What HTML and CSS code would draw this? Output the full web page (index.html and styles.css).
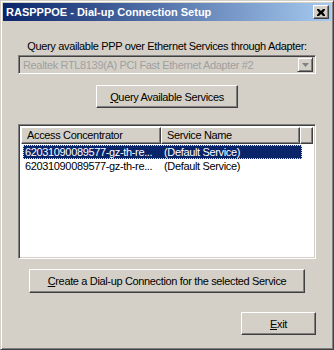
FILE: index.html
```html
<!DOCTYPE html>
<html lang="en">
  <head>
    <meta charset="UTF-8" />
    <title>RASPPPOE - Dial-up Connection Setup</title>
    <link rel="stylesheet" href="styles.css">
  </head>
  <body>
    <div class="window">
      <div class="titlebar">
        <span class="title">RASPPPOE - Dial-up Connection Setup</span>
        <span class="close">
          <svg width="8" height="7" viewBox="0 0 8 7">
            <path d="M0 0h2l2 2 2-2h2v1L6 3.5 8 6v1H6L4 5 2 7H0V6l2-2.5L0 1z" fill="#000" />
          </svg>
        </span>
      </div>
      <div class="content">
        <div class="prompt">Query available PPP over Ethernet Services through Adapter:</div>
        <div class="combo">
          <span class="combo-text">Realtek RTL8139(A) PCI Fast Ethernet Adapter #2</span>
          <span class="combo-arrow">
            <svg width="7" height="4" viewBox="0 0 7 4">
              <path d="M0 0h7L3.5 4z" fill="#808080" />
            </svg>
          </span>
        </div>
        <div class="row-center">
          <button class="btn btn-query"><u>Q</u>uery Available Services</button>
        </div>
        <div class="listview">
          <div class="lv-header">
            <span class="lv-col col-ac">Access Concentrator</span>
            <span class="lv-col col-sn">Service Name</span>
            <span class="lv-col col-rest"></span>
          </div>
          <div class="lv-row selected">
            <span class="col-ac">62031090089577-gz-th-re...</span>
            <span class="col-sn">(Default Service)</span>
          </div>
          <div class="lv-row">
            <span class="col-ac">62031090089577-gz-th-re...</span>
            <span class="col-sn">(Default Service)</span>
          </div>
        </div>
        <div class="row-center">
          <button class="btn btn-create"><u>C</u>reate a Dial-up Connection for the selected Service</button>
        </div>
        <div class="row-end">
          <button class="btn btn-exit"><u>E</u>xit</button>
        </div>
      </div>
    </div>
  </body>
</html>
```

FILE: styles.css
```css
body {
  margin: 0;
  font-family: "Liberation Sans", Arial, sans-serif;
  font-size: 11px;
  letter-spacing: -0.35px;
  background: #d4d0c8;
}
.window {
  width: 334px;
  height: 350px;
  box-sizing: border-box;
  background: #d4d0c8;
  border: 1px solid;
  border-color: #d4d0c8 #404040 #404040 #d4d0c8;
  box-shadow: inset 1px 1px #fff, inset -1px -1px #808080;
  padding: 2px;
  display: flex;
  flex-direction: column;
}
.titlebar {
  height: 18px;
  background: linear-gradient(to right, #0a246a, #a6caf0);
  display: flex;
  align-items: center;
  justify-content: space-between;
  padding: 0 2px 0 3px;
}
.title {
  color: #fff;
  font-weight: bold;
  font-size: 11px;
  letter-spacing: 0;
}
.close {
  width: 16px;
  height: 14px;
  box-sizing: border-box;
  background: #d4d0c8;
  border: 1px solid;
  border-color: #fff #404040 #404040 #fff;
  box-shadow: inset -1px -1px #808080;
  display: flex;
  align-items: center;
  justify-content: center;
}
.content {
  flex: 1;
  padding: 19px 15px 0 15px;
  display: flex;
  flex-direction: column;
}
.prompt {
  text-align: center;
  line-height: 13px;
  margin-bottom: 2px;
  white-space: nowrap;
}
.combo {
  height: 19px;
  box-sizing: border-box;
  border: 1px solid;
  border-color: #808080 #fff #fff #808080;
  box-shadow: inset 1px 1px #404040, inset -1px -1px #d4d0c8;
  padding: 2px;
  display: flex;
  align-items: center;
}
.combo-text {
  flex: 1;
  color: #a0a0a0;
  padding-left: 2px;
  white-space: nowrap;
}
.combo-arrow {
  width: 16px;
  height: 15px;
  box-sizing: border-box;
  border: 1px solid;
  border-color: #d4d0c8 #404040 #404040 #d4d0c8;
  box-shadow: inset 1px 1px #fff, inset -1px -1px #808080;
  display: flex;
  align-items: center;
  justify-content: center;
}
.row-center {
  display: flex;
  justify-content: center;
}
.row-end {
  display: flex;
  justify-content: flex-end;
}
.btn {
  font-family: "Liberation Sans", Arial, sans-serif;
  font-size: 11px;
  letter-spacing: -0.35px;
  color: #000;
  background: #d4d0c8;
  border: 1px solid;
  border-color: #fff #404040 #404040 #fff;
  box-shadow: inset -1px -1px #808080, inset 1px 1px #d4d0c8;
  padding: 0;
  white-space: nowrap;
}
.btn-query {
  width: 142px;
  height: 23px;
  margin-top: 11px;
}
.listview {
  height: 135px;
  margin-top: 16px;
  box-sizing: border-box;
  background: #fff;
  border: 1px solid;
  border-color: #808080 #fff #fff #808080;
  box-shadow: inset 1px 1px #404040, inset -1px -1px #d4d0c8;
  padding: 2px;
}
.lv-header {
  display: flex;
  height: 17px;
}
.lv-col {
  box-sizing: border-box;
  background: #d4d0c8;
  border: 1px solid;
  border-color: #fff #404040 #404040 #fff;
  box-shadow: inset -1px -1px #808080;
  padding-left: 5px;
  line-height: 15px;
  white-space: nowrap;
}
.col-ac {
  width: 140px;
}
.col-sn {
  width: 139px;
}
.col-rest {
  flex: 1;
}
.lv-row {
  display: flex;
  width: 279px;
  height: 14px;
  line-height: 12px;
  margin-left: 2px;
  box-sizing: border-box;
  border: 1px solid transparent;
  white-space: nowrap;
}
.lv-row .col-ac {
  width: 138px;
  padding-left: 1px;
  overflow: hidden;
}
.lv-row .col-sn {
  padding-left: 3px;
}
.lv-row.selected {
  margin-top: 1px;
  background: #0a246a;
  color: #fff;
  border: 1px dotted #f0e080;
}
.btn-create {
  width: 276px;
  height: 24px;
  margin-top: 10px;
}
.btn-exit {
  width: 75px;
  height: 23px;
  margin-top: 19px;
}
```
